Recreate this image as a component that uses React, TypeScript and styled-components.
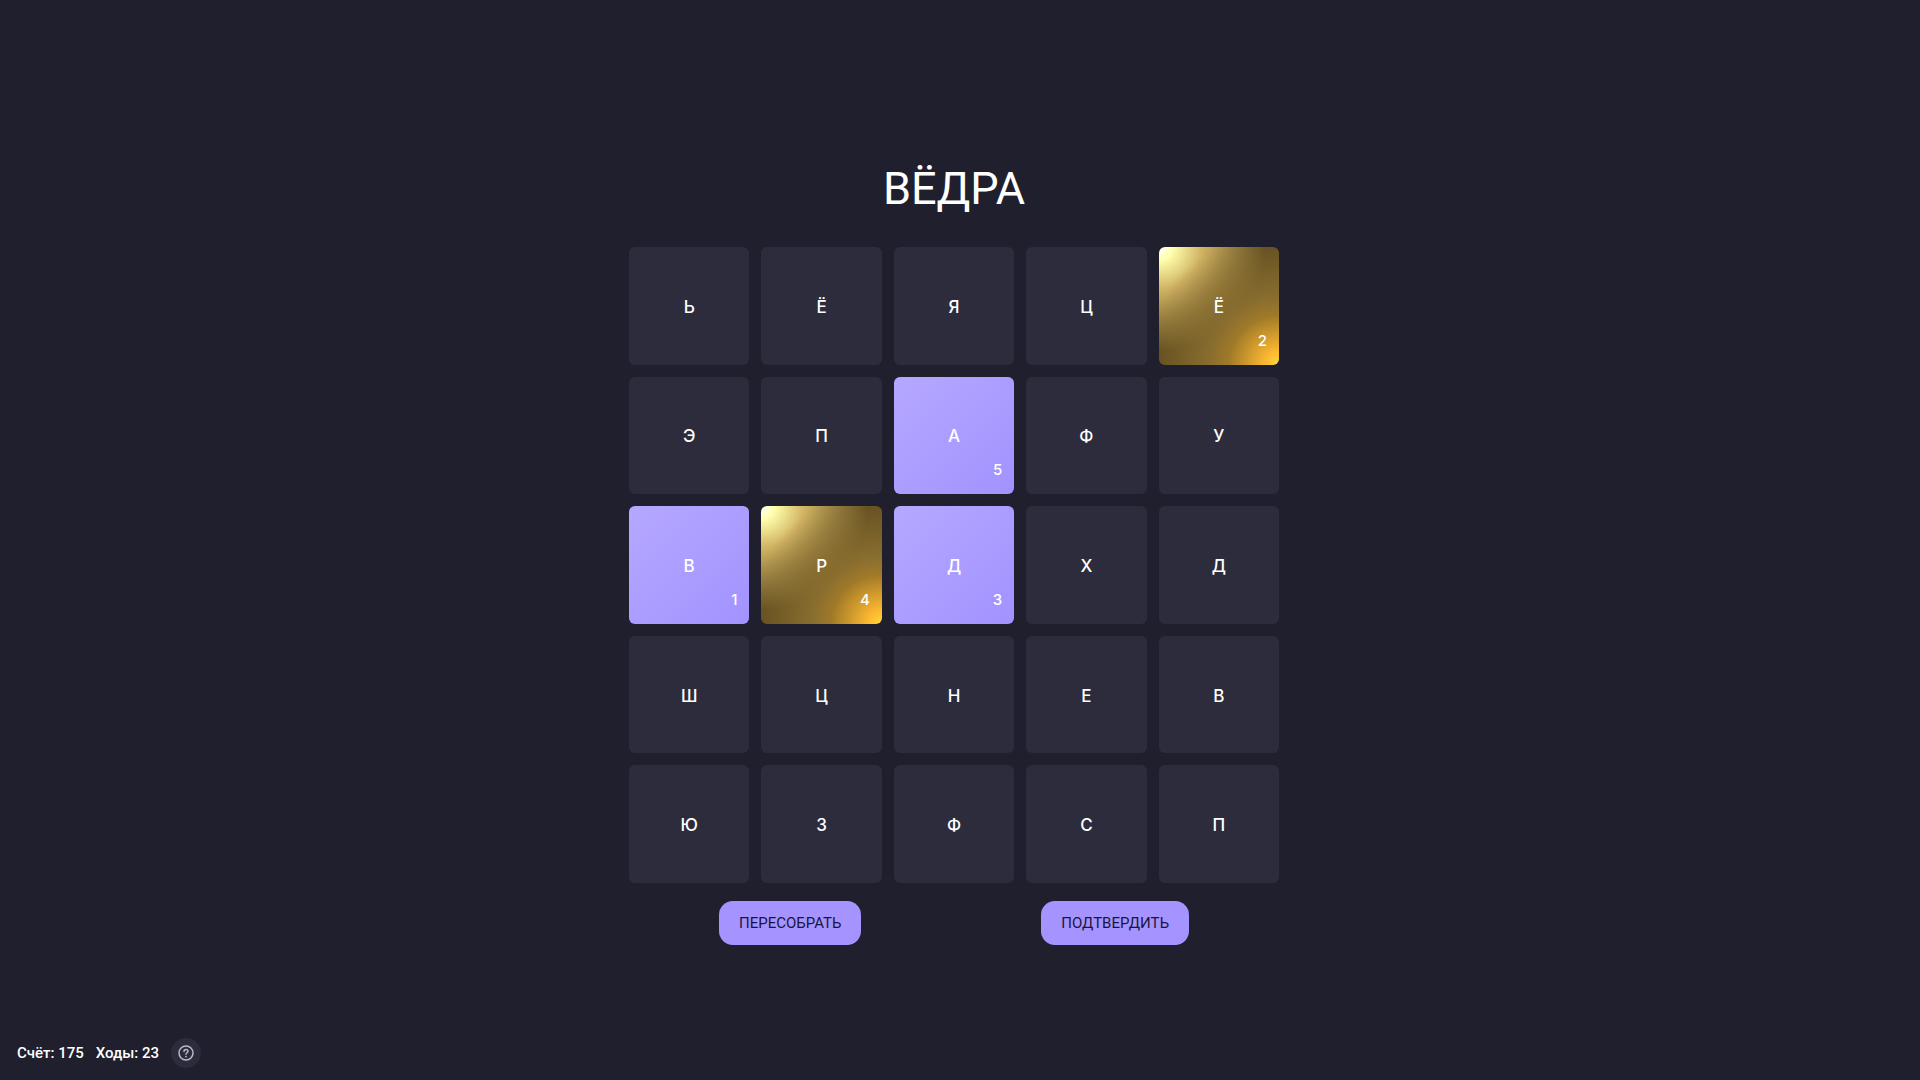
import React, { useState } from "react";
import styled, { createGlobalStyle, css } from "styled-components";

const GlobalStyle = createGlobalStyle`
  * { box-sizing: border-box; }
  body {
    margin: 0;
    background: #201f2e;
    color: #fff;
    font-family: Roboto, "Noto Sans", sans-serif;
    font-weight: 500;
  }
`;

const Page = styled.div`
  display: grid;
  grid-template-rows: 54px 1fr 54px;
  min-height: 100vh;
`;

const Game = styled.main`
  grid-row: 2;
  display: flex;
  flex-direction: column;
  align-items: center;
  justify-content: center;
  padding: 0 12px 0 0;
`;

const Word = styled.h1`
  margin: 0;
  padding: 24px 0 28px;
  font-size: 45px;
  font-weight: 400;
  line-height: 60px;
`;

const Board = styled.div`
  display: grid;
  grid-template-columns: repeat(5, 1fr);
  grid-auto-rows: 1fr;
  gap: 12px;
  width: 100%;
  max-width: 650px;
  height: 636px;
`;

type Kind = "plain" | "picked" | "gold";

const Tile = styled.button<{ $kind: Kind }>`
  position: relative;
  padding: 2px 0 0;
  border: 0;
  border-radius: 6px;
  background: #2d2c3c;
  color: #fff;
  font-family: Inter, Roboto, sans-serif;
  font-weight: 500;
  font-size: 17px;
  line-height: 24px;
  cursor: pointer;
  ${({ $kind }) =>
    $kind === "picked" &&
    css`
      background: linear-gradient(135deg, #b5a8ff, #a292ff);
    `}
  ${({ $kind }) =>
    $kind === "gold" &&
    css`
      background:
        radial-gradient(ellipse farthest-corner at right bottom, #fedb37 0%, #fdb931 8%, #9f7928 30%, #8a6e2f 40%, transparent 80%),
        radial-gradient(ellipse farthest-corner at left top, #ffffff 0%, #ffffac 8%, #d1b464 25%, #5d4a1f 62.5%, #5d4a1f 100%);
    `}
`;

const Order = styled.span`
  position: absolute;
  right: 12px;
  bottom: 12px;
  font-size: 15px;
  line-height: 24px;
`;

const Actions = styled.div`
  display: flex;
  justify-content: space-around;
  width: 100%;
  max-width: 650px;
  padding-top: 18px;
`;

const Action = styled.button`
  height: 44px;
  padding: 0 20px;
  border: 0;
  border-radius: 14px;
  background: #a594ff;
  color: #1b1440;
  font: inherit;
  font-size: 15px;
  font-weight: 400;
  cursor: pointer;
`;

const Status = styled.footer`
  grid-row: 3;
  display: flex;
  align-items: center;
  gap: 12px;
  height: 54px;
  padding: 0 17px;
  font-size: 15px;
  line-height: 24px;
`;

const Help = styled.button`
  display: grid;
  place-items: center;
  width: 30px;
  height: 30px;
  padding: 0;
  border: 0;
  border-radius: 50%;
  background: #2d2c3c;
  color: #b9b7c8;
  cursor: pointer;
`;

const letters = "ЬЁЯЦЁЭПАФУВРДХДШЦНЕВЮЗФСП".split("");
const golden = [4, 11];

export default function App() {
  const [path, setPath] = useState<number[]>([10, 4, 12, 11, 7]);

  const toggle = (index: number) =>
    setPath((old) => (old.includes(index) ? old.filter((i) => i !== index) : [...old, index]));

  return (
    <>
      <GlobalStyle />
      <Page>
        <Game>
          <Word>{path.map((i) => letters[i]).join("")}</Word>
          <Board>
            {letters.map((letter, i) => {
              const step = path.indexOf(i) + 1;
              const kind: Kind = golden.includes(i) ? "gold" : step ? "picked" : "plain";
              return (
                <Tile key={i} type="button" $kind={kind} aria-pressed={step > 0} onClick={() => toggle(i)}>
                  {letter}
                  {step > 0 && <Order>{step}</Order>}
                </Tile>
              );
            })}
          </Board>
          <Actions>
            <Action type="button">ПЕРЕСОБРАТЬ</Action>
            <Action type="button">ПОДТВЕРДИТЬ</Action>
          </Actions>
        </Game>
        <Status>
          <span>Счёт: 175</span>
          <span>Ходы: 23</span>
          <Help type="button" aria-label="Помощь">
            <svg width="16" height="16" viewBox="0 0 16 16" fill="none" stroke="currentColor" strokeWidth="1.5" strokeLinecap="round" aria-hidden="true">
              <circle cx="8" cy="8" r="7" />
              <path d="M6 6.4C6 5.2 6.9 4.4 8 4.4s2 .8 2 1.9c0 1.4-2 1.5-2 3" />
              <circle cx="8" cy="11.6" r=".9" fill="currentColor" stroke="none" />
            </svg>
          </Help>
        </Status>
      </Page>
    </>
  );
}
